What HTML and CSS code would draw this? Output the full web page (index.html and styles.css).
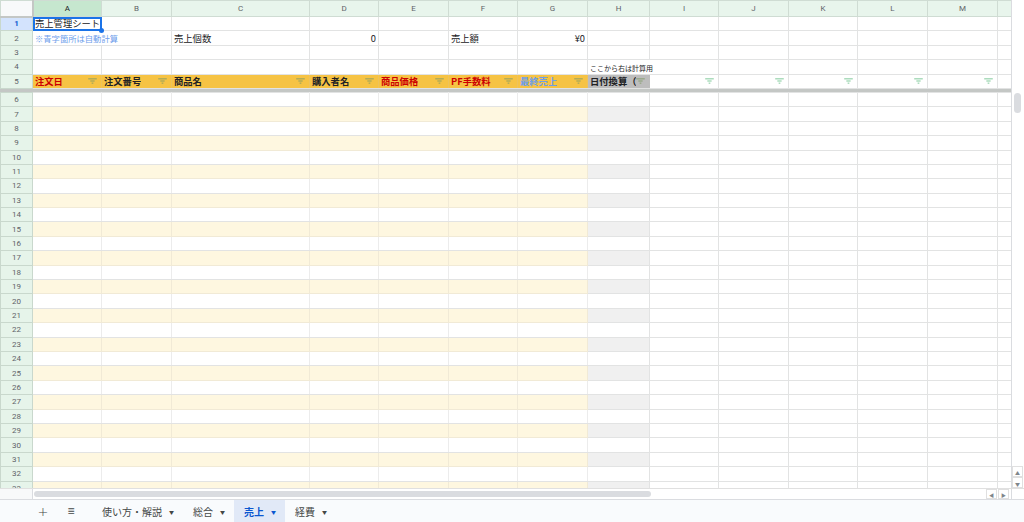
FILE: index.html
```html
<!DOCTYPE html>
<html lang="ja">
<head>
    <meta charset="UTF-8">
    <title>売上管理シート</title>
    <link rel="stylesheet" href="styles.css">
</head>
<body>
<div class="app">
    <div class="main">
        <div class="grid">
            <table class="top">
                <colgroup>
                    <col class="c-rh"><col class="c69"><col class="c70"><col class="c138"><col class="c69"><col class="c70"><col class="c69"><col class="c70"><col class="c62"><col class="c69"><col class="c70"><col class="c69"><col class="c70"><col class="c70"><col class="c15">
                </colgroup>
                <tr class="colhead">
                    <th class="corner"></th><th class="sel">A</th><th>B</th><th>C</th><th>D</th><th>E</th><th>F</th><th>G</th><th>H</th><th>I</th><th>J</th><th>K</th><th>L</th><th>M</th><th></th>
                </tr>
                <tr>
                    <th class="rsel">1</th><td class="active">売上管理シート</td><td></td><td></td><td></td><td></td><td></td><td></td><td></td><td></td><td></td><td></td><td></td><td></td><td></td>
                </tr>
                <tr>
                    <th>2</th><td class="note" colspan="2">※青字箇所は自動計算</td><td>売上個数</td><td class="num">0</td><td></td><td>売上額</td><td class="num">¥0</td><td></td><td></td><td></td><td></td><td></td><td></td><td></td>
                </tr>
                <tr>
                    <th>3</th><td></td><td></td><td></td><td></td><td></td><td></td><td></td><td></td><td></td><td></td><td></td><td></td><td></td><td></td>
                </tr>
                <tr>
                    <th>4</th><td></td><td></td><td></td><td></td><td></td><td></td><td></td><td class="tiny" colspan="2">ここから右は計算用</td><td></td><td></td><td></td><td></td><td></td>
                </tr>
                <tr class="fhead">
                    <th>5</th>
                    <td><div class="fh"><span class="red">注文日</span><svg class="fi" viewBox="0 0 10 7"><path d="M0 1h10M2.5 3.5h5M4 6h2"/></svg></div></td>
                    <td><div class="fh"><span>注文番号</span><svg class="fi" viewBox="0 0 10 7"><path d="M0 1h10M2.5 3.5h5M4 6h2"/></svg></div></td>
                    <td><div class="fh"><span>商品名</span><svg class="fi" viewBox="0 0 10 7"><path d="M0 1h10M2.5 3.5h5M4 6h2"/></svg></div></td>
                    <td><div class="fh"><span>購入者名</span><svg class="fi" viewBox="0 0 10 7"><path d="M0 1h10M2.5 3.5h5M4 6h2"/></svg></div></td>
                    <td><div class="fh"><span class="red">商品価格</span><svg class="fi" viewBox="0 0 10 7"><path d="M0 1h10M2.5 3.5h5M4 6h2"/></svg></div></td>
                    <td><div class="fh"><span class="red">PF手数料</span><svg class="fi" viewBox="0 0 10 7"><path d="M0 1h10M2.5 3.5h5M4 6h2"/></svg></div></td>
                    <td><div class="fh"><span class="blue">最終売上</span><svg class="fi" viewBox="0 0 10 7"><path d="M0 1h10M2.5 3.5h5M4 6h2"/></svg></div></td>
                    <td class="calc"><div class="fh"><span>日付換算（</span><svg class="fi" viewBox="0 0 10 7"><path d="M0 1h10M2.5 3.5h5M4 6h2"/></svg></div></td>
                    <td class="plain"><div class="fh"><span></span><svg class="fi" viewBox="0 0 10 7"><path d="M0 1h10M2.5 3.5h5M4 6h2"/></svg></div></td>
                    <td class="plain"><div class="fh"><span></span><svg class="fi" viewBox="0 0 10 7"><path d="M0 1h10M2.5 3.5h5M4 6h2"/></svg></div></td>
                    <td class="plain"><div class="fh"><span></span><svg class="fi" viewBox="0 0 10 7"><path d="M0 1h10M2.5 3.5h5M4 6h2"/></svg></div></td>
                    <td class="plain"><div class="fh"><span></span><svg class="fi" viewBox="0 0 10 7"><path d="M0 1h10M2.5 3.5h5M4 6h2"/></svg></div></td>
                    <td class="plain"><div class="fh"><span></span><svg class="fi" viewBox="0 0 10 7"><path d="M0 1h10M2.5 3.5h5M4 6h2"/></svg></div></td>
                    <td class="plain"></td>
                </tr>
            </table>
            <div class="freeze"></div>
            <table class="body">
                <colgroup>
                    <col class="c-rh"><col class="c69"><col class="c70"><col class="c138"><col class="c69"><col class="c70"><col class="c69"><col class="c70"><col class="c62"><col class="c69"><col class="c70"><col class="c69"><col class="c70"><col class="c70"><col class="c15">
                </colgroup>
                <tr><th>6</th><td></td><td></td><td></td><td></td><td></td><td></td><td></td><td></td><td></td><td></td><td></td><td></td><td></td><td></td></tr>
                <tr><th>7</th><td></td><td></td><td></td><td></td><td></td><td></td><td></td><td></td><td></td><td></td><td></td><td></td><td></td><td></td></tr>
                <tr><th>8</th><td></td><td></td><td></td><td></td><td></td><td></td><td></td><td></td><td></td><td></td><td></td><td></td><td></td><td></td></tr>
                <tr><th>9</th><td></td><td></td><td></td><td></td><td></td><td></td><td></td><td></td><td></td><td></td><td></td><td></td><td></td><td></td></tr>
                <tr><th>10</th><td></td><td></td><td></td><td></td><td></td><td></td><td></td><td></td><td></td><td></td><td></td><td></td><td></td><td></td></tr>
                <tr><th>11</th><td></td><td></td><td></td><td></td><td></td><td></td><td></td><td></td><td></td><td></td><td></td><td></td><td></td><td></td></tr>
                <tr><th>12</th><td></td><td></td><td></td><td></td><td></td><td></td><td></td><td></td><td></td><td></td><td></td><td></td><td></td><td></td></tr>
                <tr><th>13</th><td></td><td></td><td></td><td></td><td></td><td></td><td></td><td></td><td></td><td></td><td></td><td></td><td></td><td></td></tr>
                <tr><th>14</th><td></td><td></td><td></td><td></td><td></td><td></td><td></td><td></td><td></td><td></td><td></td><td></td><td></td><td></td></tr>
                <tr><th>15</th><td></td><td></td><td></td><td></td><td></td><td></td><td></td><td></td><td></td><td></td><td></td><td></td><td></td><td></td></tr>
                <tr><th>16</th><td></td><td></td><td></td><td></td><td></td><td></td><td></td><td></td><td></td><td></td><td></td><td></td><td></td><td></td></tr>
                <tr><th>17</th><td></td><td></td><td></td><td></td><td></td><td></td><td></td><td></td><td></td><td></td><td></td><td></td><td></td><td></td></tr>
                <tr><th>18</th><td></td><td></td><td></td><td></td><td></td><td></td><td></td><td></td><td></td><td></td><td></td><td></td><td></td><td></td></tr>
                <tr><th>19</th><td></td><td></td><td></td><td></td><td></td><td></td><td></td><td></td><td></td><td></td><td></td><td></td><td></td><td></td></tr>
                <tr><th>20</th><td></td><td></td><td></td><td></td><td></td><td></td><td></td><td></td><td></td><td></td><td></td><td></td><td></td><td></td></tr>
                <tr><th>21</th><td></td><td></td><td></td><td></td><td></td><td></td><td></td><td></td><td></td><td></td><td></td><td></td><td></td><td></td></tr>
                <tr><th>22</th><td></td><td></td><td></td><td></td><td></td><td></td><td></td><td></td><td></td><td></td><td></td><td></td><td></td><td></td></tr>
                <tr><th>23</th><td></td><td></td><td></td><td></td><td></td><td></td><td></td><td></td><td></td><td></td><td></td><td></td><td></td><td></td></tr>
                <tr><th>24</th><td></td><td></td><td></td><td></td><td></td><td></td><td></td><td></td><td></td><td></td><td></td><td></td><td></td><td></td></tr>
                <tr><th>25</th><td></td><td></td><td></td><td></td><td></td><td></td><td></td><td></td><td></td><td></td><td></td><td></td><td></td><td></td></tr>
                <tr><th>26</th><td></td><td></td><td></td><td></td><td></td><td></td><td></td><td></td><td></td><td></td><td></td><td></td><td></td><td></td></tr>
                <tr><th>27</th><td></td><td></td><td></td><td></td><td></td><td></td><td></td><td></td><td></td><td></td><td></td><td></td><td></td><td></td></tr>
                <tr><th>28</th><td></td><td></td><td></td><td></td><td></td><td></td><td></td><td></td><td></td><td></td><td></td><td></td><td></td><td></td></tr>
                <tr><th>29</th><td></td><td></td><td></td><td></td><td></td><td></td><td></td><td></td><td></td><td></td><td></td><td></td><td></td><td></td></tr>
                <tr><th>30</th><td></td><td></td><td></td><td></td><td></td><td></td><td></td><td></td><td></td><td></td><td></td><td></td><td></td><td></td></tr>
                <tr><th>31</th><td></td><td></td><td></td><td></td><td></td><td></td><td></td><td></td><td></td><td></td><td></td><td></td><td></td><td></td></tr>
                <tr><th>32</th><td></td><td></td><td></td><td></td><td></td><td></td><td></td><td></td><td></td><td></td><td></td><td></td><td></td><td></td></tr>
                <tr><th>33</th><td></td><td></td><td></td><td></td><td></td><td></td><td></td><td></td><td></td><td></td><td></td><td></td><td></td><td></td></tr>
            </table>
        </div>
        <div class="vscroll">
            <div class="vthumb"></div>
            <div class="varrows">
                <span class="arr">▲</span>
                <span class="arr">▼</span>
            </div>
        </div>
    </div>
    <div class="hscroll">
        <div class="hleft"></div>
        <div class="htrack"><div class="hthumb"></div></div>
        <div class="harrows"><span class="arr">◀</span><span class="arr">▶</span></div>
        <div class="hcorner"></div>
    </div>
    <div class="tabs">
        <span class="tool">+</span>
        <span class="tool menu">≡</span>
        <span class="tab">使い方・解説 <i>▼</i></span>
        <span class="tab">総合 <i>▼</i></span>
        <span class="tab current">売上 <i>▼</i></span>
        <span class="tab">経費 <i>▼</i></span>
    </div>
</div>
</body>
</html>
```

FILE: styles.css
```css
body {
    margin: 0;
    font-family: "Noto Sans CJK JP", "Liberation Sans", sans-serif;
    background-color: #fff;
    overflow: hidden;
}
.app {
    width: 1024px;
    height: 522px;
    display: flex;
    flex-direction: column;
}
.main {
    display: flex;
    height: 488px;
}
.grid {
    width: 1012px;
    overflow: hidden;
}
table {
    border-collapse: collapse;
    table-layout: fixed;
    width: 1012px;
}
.c-rh { width: 32px; }
.c69 { width: 69px; }
.c70 { width: 70px; }
.c138 { width: 138px; }
.c62 { width: 62px; }
.c15 { width: 15px; }

td, th {
    padding: 0 2px;
    height: 14.4px;
    font-size: 9.3px;
    line-height: 11px;
    white-space: nowrap;
    overflow: hidden;
    border: 1px solid #e2e3e3;
    color: #202124;
    text-align: left;
    font-weight: normal;
    box-sizing: border-box;
}
th {
    background-color: #e6f4ea;
    color: #5f6368;
    font-size: 8px;
    text-align: center;
    font-family: "Roboto", "Liberation Sans", sans-serif;
    border-color: #c9d8cd;
    padding: 0;
}
.colhead th {
    height: 16px;
    background-color: #e8f5ec;
    border-color: #cfdcd3;
}
.colhead th.sel {
    background-color: #c6e7cf;
    color: #202124;
}
.colhead th.corner {
    background-color: #f8f9fa;
    border-right: 2px solid #c4c7c5;
    border-bottom: 2px solid #c4c7c5;
}
th.rsel {
    background-color: #d3e3fd;
    color: #0b57d0;
    font-weight: bold;
}
td.active {
    position: relative;
    outline: 2px solid #1a73e8;
    outline-offset: -2px;
    overflow: visible;
}
td.active::after {
    content: "";
    position: absolute;
    right: -3px;
    bottom: -3px;
    width: 5px;
    height: 5px;
    border-radius: 50%;
    background-color: #1a73e8;
}
.note {
    color: #6d9eeb;
    font-size: 8.3px;
}
.num {
    text-align: right;
}
.tiny {
    font-size: 7px;
    vertical-align: bottom;
}
.fhead td {
    background-color: #f6c344;
    border-top: 1px solid #34a853;
    border-right-color: #eec25c;
    font-weight: bold;
    padding-right: 4px;
}
.fhead td.calc {
    background-color: #bdbdbd;
    border-right-color: #bdbdbd;
}
.fhead td.plain {
    background-color: #fff;
    border-right-color: #e2e3e3;
}
.fh {
    display: flex;
    justify-content: space-between;
    align-items: center;
}
.fh span {
    overflow: hidden;
    line-height: 12px;
}
.red { color: #cc0000; }
.blue { color: #6d9eeb; }
.fi {
    width: 9px;
    height: 6px;
    flex: none;
    stroke: #7f9a66;
    stroke-width: 1;
    fill: none;
}
.plain .fi {
    stroke: #6cc18a;
}
.freeze {
    height: 3px;
    background-color: #c4c7c5;
}
.body td:nth-child(n+2):nth-child(-n+8) {
    border-right-color: #ececec;
}
.body tr:nth-child(even) td:nth-child(n+2):nth-child(-n+8) {
    background-color: #fef7e0;
    border-color: #f1ead6;
}
.body tr:nth-child(even) td:nth-child(9) {
    background-color: #f0f0f0;
}
.vscroll {
    width: 12px;
    border-left: 1px solid #dadce0;
    background-color: #fff;
    position: relative;
}
.vthumb {
    position: absolute;
    top: 93px;
    left: 2px;
    width: 7px;
    height: 20px;
    border-radius: 4px;
    background-color: #dadce0;
}
.varrows {
    position: absolute;
    bottom: 0;
    left: 0;
    width: 12px;
    display: flex;
    flex-direction: column;
}
.arr {
    font-size: 5px;
    color: #80868b;
    text-align: center;
    width: 11px;
    height: 11px;
    line-height: 11px;
    border: 1px solid #e0e0e0;
    box-sizing: border-box;
    background-color: #fff;
}
.hscroll {
    display: flex;
    height: 10px;
    border-top: 1px solid #e0e0e0;
    border-bottom: 1px solid #dadce0;
}
.hleft {
    width: 32px;
    background-color: #f8f9fa;
    border-right: 1px solid #dadce0;
}
.htrack {
    flex: 1;
    position: relative;
}
.hthumb {
    position: absolute;
    left: 1px;
    top: 2px;
    width: 617px;
    height: 6px;
    border-radius: 3px;
    background-color: #dadce0;
}
.harrows {
    display: flex;
    gap: 1px;
    padding-right: 2px;
}
.harrows .arr {
    height: 10px;
    line-height: 9px;
}
.hcorner {
    width: 12px;
    border-left: 1px solid #dadce0;
}
.tabs {
    flex: 1;
    display: flex;
    align-items: stretch;
    background-color: #f9fbfd;
    padding-left: 35px;
    font-size: 10px;
    color: #444746;
}
.tool {
    width: 16px;
    display: flex;
    align-items: center;
    justify-content: center;
    font-size: 13px;
    margin-right: 12px;
    font-family: "DejaVu Sans", sans-serif;
    font-weight: 300;
}
.tool.menu {
    font-size: 12px;
    margin-right: 13px;
}
.tab {
    display: flex;
    align-items: center;
    padding: 0 9px 0 10px;
}
.tab i {
    font-style: normal;
    font-size: 5px;
    margin-left: 7px;
}
.tab.current {
    background-color: #e1e9f7;
    color: #0b57d0;
    font-weight: bold;
}
```
